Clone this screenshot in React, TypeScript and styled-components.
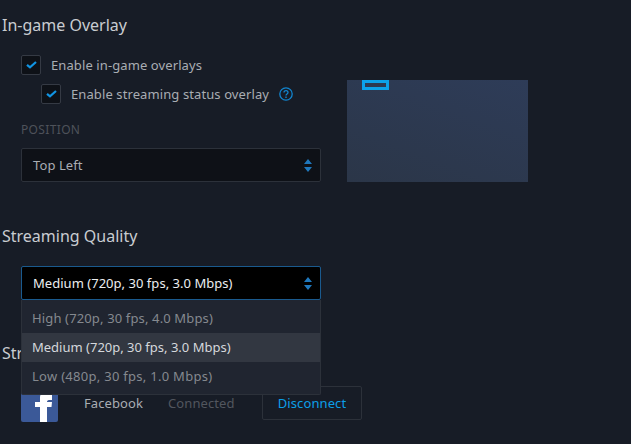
import styled, { createGlobalStyle } from "styled-components";

const GlobalStyle = createGlobalStyle`
  html, body {
    margin: 0;
    padding: 0;
    width: 631px;
    height: 444px;
    overflow: hidden;
    background: #171c26;
    font-family: "Noto Sans", sans-serif;
    letter-spacing: 0.1px;
  }
`;

const Arrows = () => (
  <svg width="8" height="13" viewBox="0 0 8 13">
    <path d="M4 0 L8 5 H0 Z M0 8 H8 L4 13 Z" fill="#1f78bd" />
  </svg>
);

const Check = () => (
  <svg width="11" height="8" viewBox="0 0 11 8">
    <path d="M1 3.800 L4 6.400 L10 1" fill="none" stroke="#1194e3" strokeWidth="2.2" />
  </svg>
);

const HelpIcon = () => (
  <HelpSvg width="14" height="14" viewBox="0 0 14 14">
    <circle cx="7" cy="7" r="6.2" fill="none" stroke="#1185cf" strokeWidth="1.3" />
    <path d="M5 5.500 C5 3 9 3 9 5.500 C9 7 7 7 7 8.500" fill="none" stroke="#1185cf" strokeWidth="1.3" />
    <rect x="6.300" y="9.500" width="1.400" height="1.500" fill="#1185cf" />
  </HelpSvg>
);

const App = () => {
  return (
    <Page>
      <GlobalStyle />
      <Title>In-game Overlay</Title>
      <OverlayRow>
        <OverlayForm>
          <CheckRow>
            <CheckBox><Check /></CheckBox>
            <Label>Enable in-game overlays</Label>
          </CheckRow>
          <CheckRow $nested>
            <CheckBox><Check /></CheckBox>
            <Label>Enable streaming status overlay</Label>
            <HelpIcon />
          </CheckRow>
          <FieldLabel>POSITION</FieldLabel>
          <Select>
            <span>Top Left</span>
            <Arrows />
          </Select>
        </OverlayForm>
        <Preview>
          <Marker />
        </Preview>
      </OverlayRow>

      <Title $top={43}>Streaming Quality</Title>
      <QualityBlock>
        <Select $open>
          <span>Medium (720p, 30 fps, 3.0 Mbps)</span>
          <Arrows />
        </Select>
        <Menu>
          <MenuItem $tracking={0.14}>High (720p, 30 fps, 4.0 Mbps)</MenuItem>
          <MenuItem $active>Medium (720p, 30 fps, 3.0 Mbps)</MenuItem>
          <MenuItem $tracking={0.28}>Low (480p, 30 fps, 1.0 Mbps)</MenuItem>
        </Menu>
      </QualityBlock>

      <Title $top={42}>Streaming Accounts</Title>
      <AccountRow>
        <FacebookLogo>
          <svg width="37" height="35" viewBox="0 0 37 35">
            <path d="M19 35 V20 H14 V15 H19 V11 C19 6 22 3 27 3 H31 V13 H28 C26.500 13 26 14 26 15 H31 L30.500 20 H26 V35 Z" fill="#fff" />
          </svg>
        </FacebookLogo>
        <AccountName>Facebook</AccountName>
        <AccountStatus>Connected</AccountStatus>
        <DisconnectButton>Disconnect</DisconnectButton>
      </AccountRow>
    </Page>
  );
};

export default App;

const Page = styled.div`
  width: 631px;
  height: 444px;
  padding: 14px 0 0 2px;
  box-sizing: border-box;
  overflow: hidden;
`;

const Title = styled.div<{ $top?: number }>`
  margin-top: ${(p) => p.$top || 0}px;
  height: 22px;
  font-size: 16px;
  line-height: 22px;
  letter-spacing: 0;
  color: #c9ccd1;
`;

const OverlayRow = styled.div`
  display: flex;
  margin-left: 19px;
  padding-top: 19px;
`;

const OverlayForm = styled.div`
  width: 300px;
  display: flex;
  flex-direction: column;
`;

const CheckRow = styled.div<{ $nested?: boolean }>`
  display: flex;
  align-items: center;
  height: 20px;
  margin-left: ${(p) => (p.$nested ? 20 : 0)}px;
  margin-bottom: 9px;
`;

const CheckBox = styled.div`
  width: 20px;
  height: 20px;
  box-sizing: border-box;
  border: 1px solid #353a44;
  border-radius: 2px;
  background: #0e1117;
  display: flex;
  align-items: center;
  justify-content: center;
  flex-shrink: 0;
`;

const Label = styled.span`
  margin-left: 10px;
  font-size: 13px;
  color: #a9adb3;
  white-space: nowrap;
`;

const HelpSvg = styled.svg`
  margin-left: 10px;
  flex-shrink: 0;
`;

const FieldLabel = styled.div`
  margin-top: 8px;
  font-size: 12px;
  line-height: 18px;
  letter-spacing: 0.35px;
  color: #4e525a;
`;

const Select = styled.div<{ $open?: boolean }>`
  margin-top: ${(p) => (p.$open ? 0 : 9)}px;
  width: 300px;
  height: 34px;
  padding: 0 8px 0 11px;
  box-sizing: border-box;
  display: flex;
  align-items: center;
  justify-content: space-between;
  background: ${(p) => (p.$open ? "#000" : "#0e1117")};
  border: 1px solid ${(p) => (p.$open ? "#1a5a8e" : "#2c313a")};
  border-radius: 2px;
  font-size: 13px;
  letter-spacing: ${(p) => (p.$open ? 0.03 : 0.1)}px;
  color: ${(p) => (p.$open ? "#eceef0" : "#a9adb3")};
`;

const Preview = styled.div`
  position: relative;
  width: 181px;
  height: 102px;
  margin: 25px 0 0 26px;
  background: linear-gradient(200deg, #2e3c58, #2b3648);
`;

const Marker = styled.div`
  position: absolute;
  left: 15px;
  top: 0;
  width: 27px;
  height: 10px;
  box-sizing: border-box;
  border: 3px solid #0ca2ea;
`;

const QualityBlock = styled.div`
  position: relative;
  margin: 19px 0 0 19px;
  width: 300px;
`;

const Menu = styled.div`
  position: absolute;
  left: 0;
  top: 34px;
  width: 300px;
  height: 95px;
  box-sizing: border-box;
  padding-top: 4px;
  background: #202530;
  border: 1px solid #2c313a;
  border-top: none;
  border-radius: 0 0 2px 2px;
  z-index: 2;
`;

const MenuItem = styled.div<{ $active?: boolean; $tracking?: number }>`
  height: 29px;
  line-height: 29px;
  padding-left: 10px;
  font-size: 13px;
  letter-spacing: ${(p) => p.$tracking || 0}px;
  color: ${(p) => (p.$active ? "#d5d8dc" : "#85898f")};
  background: ${(p) => (p.$active ? "#323741" : "transparent")};
`;

const AccountRow = styled.div`
  display: flex;
  align-items: flex-start;
  margin: 22px 0 0 19px;
`;

const FacebookLogo = styled.div`
  width: 37px;
  height: 35px;
  margin-top: 1px;
  background: #3b5998;
  border-radius: 2px;
  overflow: hidden;
  display: flex;
`;

const AccountName = styled.span`
  margin-left: 26px;
  width: 84px;
  line-height: 34px;
  font-size: 13px;
  color: #a9adb3;
`;

const AccountStatus = styled.span`
  width: 94px;
  line-height: 34px;
  font-size: 13px;
  color: #52565e;
`;

const DisconnectButton = styled.div`
  width: 100px;
  height: 34px;
  box-sizing: border-box;
  border: 1px solid #2c313a;
  border-radius: 2px;
  display: flex;
  align-items: center;
  justify-content: center;
  font-size: 13px;
  color: #0c9fe8;
`;
